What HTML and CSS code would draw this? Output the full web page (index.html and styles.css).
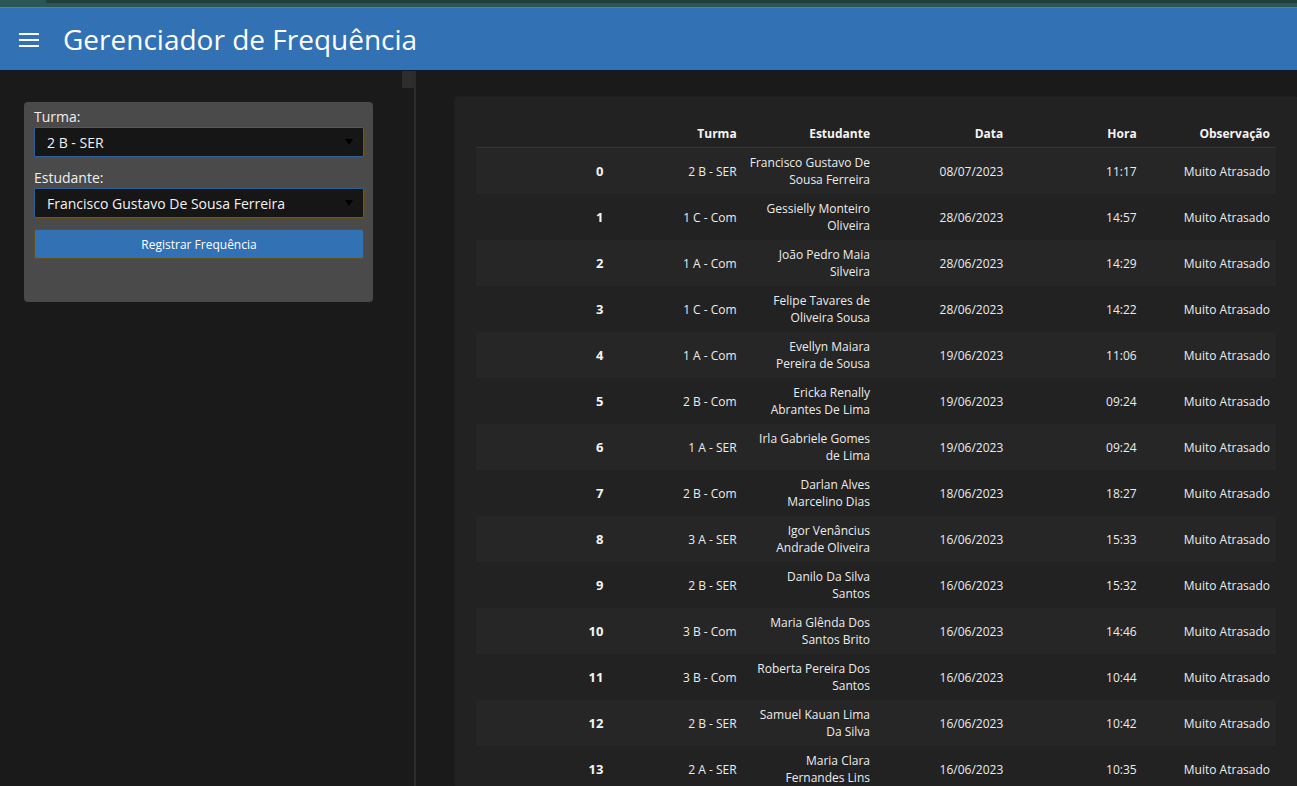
FILE: index.html
```html
<!DOCTYPE html>
<html lang="pt-BR">
<head>
<meta charset="utf-8">
<title>Gerenciador de Frequência</title>
<link rel="stylesheet" href="styles.css">
</head>
<body>
<div class="topstrip"><div class="topstrip-band"></div></div>
<header class="appbar">
  <svg class="menu-icon" width="20" height="14" viewBox="0 0 20 14" aria-hidden="true">
    <rect x="0" y="0" width="20" height="2" fill="#ffffff"/>
    <rect x="0" y="6" width="20" height="2" fill="#ffffff"/>
    <rect x="0" y="12" width="20" height="2" fill="#ffffff"/>
  </svg>
  <h1 class="title">Gerenciador de Frequência</h1>
</header>
<div class="layout">
  <aside class="sidebar">
    <div class="form-card">
      <label class="field-label">Turma:</label>
      <div class="select"><span>2 B - SER</span><span class="caret"></span></div>
      <label class="field-label second">Estudante:</label>
      <div class="select active"><span>Francisco Gustavo De Sousa Ferreira</span><span class="caret"></span></div>
      <button class="btn">Registrar Frequência</button>
    </div>
  </aside>
  <div class="scrolltrack"><div class="scrollthumb"></div></div>
  <main class="main">
    <div class="table-card">
      <table class="grid">
        <thead>
          <tr><th></th><th>Turma</th><th>Estudante</th><th>Data</th><th>Hora</th><th>Observação</th></tr>
        </thead>
        <tbody>
          <tr><td class="idx">0</td><td>2 B - SER</td><td>Francisco Gustavo De Sousa Ferreira</td><td>08/07/2023</td><td>11:17</td><td>Muito Atrasado</td></tr>
          <tr><td class="idx">1</td><td>1 C - Com</td><td>Gessielly Monteiro Oliveira</td><td>28/06/2023</td><td>14:57</td><td>Muito Atrasado</td></tr>
          <tr><td class="idx">2</td><td>1 A - Com</td><td>João Pedro Maia Silveira</td><td>28/06/2023</td><td>14:29</td><td>Muito Atrasado</td></tr>
          <tr><td class="idx">3</td><td>1 C - Com</td><td>Felipe Tavares de Oliveira Sousa</td><td>28/06/2023</td><td>14:22</td><td>Muito Atrasado</td></tr>
          <tr><td class="idx">4</td><td>1 A - Com</td><td>Evellyn Maiara Pereira de Sousa</td><td>19/06/2023</td><td>11:06</td><td>Muito Atrasado</td></tr>
          <tr><td class="idx">5</td><td>2 B - Com</td><td>Ericka Renally Abrantes De Lima</td><td>19/06/2023</td><td>09:24</td><td>Muito Atrasado</td></tr>
          <tr><td class="idx">6</td><td>1 A - SER</td><td>Irla Gabriele Gomes de Lima</td><td>19/06/2023</td><td>09:24</td><td>Muito Atrasado</td></tr>
          <tr><td class="idx">7</td><td>2 B - Com</td><td>Darlan Alves Marcelino Dias</td><td>18/06/2023</td><td>18:27</td><td>Muito Atrasado</td></tr>
          <tr><td class="idx">8</td><td>3 A - SER</td><td>Igor Venâncius Andrade Oliveira</td><td>16/06/2023</td><td>15:33</td><td>Muito Atrasado</td></tr>
          <tr><td class="idx">9</td><td>2 B - SER</td><td>Danilo Da Silva Santos</td><td>16/06/2023</td><td>15:32</td><td>Muito Atrasado</td></tr>
          <tr><td class="idx">10</td><td>3 B - Com</td><td>Maria Glênda Dos Santos Brito</td><td>16/06/2023</td><td>14:46</td><td>Muito Atrasado</td></tr>
          <tr><td class="idx">11</td><td>3 B - Com</td><td>Roberta Pereira Dos Santos</td><td>16/06/2023</td><td>10:44</td><td>Muito Atrasado</td></tr>
          <tr><td class="idx">12</td><td>2 B - SER</td><td>Samuel Kauan Lima Da Silva</td><td>16/06/2023</td><td>10:42</td><td>Muito Atrasado</td></tr>
          <tr><td class="idx">13</td><td>2 A - SER</td><td>Maria Clara Fernandes Lins</td><td>16/06/2023</td><td>10:35</td><td>Muito Atrasado</td></tr>
        </tbody>
      </table>
    </div>
  </main>
</div>
</body>
</html>
```

FILE: styles.css
```css
html, body {
  margin: 0;
  padding: 0;
  height: 786px;
  overflow: hidden;
  background: #1a1a1a;
  font-family: "Open Sans", "Noto Sans", "DejaVu Sans", sans-serif;
  color: #e8e8e8;
}

.topstrip {
  height: 8px;
  background: #2a5654;
  box-sizing: border-box;
  border-bottom: 1px solid #4d8a7c;
  padding-left: 46px;
}
.topstrip-band {
  height: 3px;
  background: #1f403f;
}

.appbar {
  height: 63px;
  background: #3171b4;
  border-bottom: 1px solid #0f1a26;
  display: flex;
  align-items: center;
  padding-left: 19px;
  box-sizing: border-box;
}
.menu-icon {
  flex: none;
  margin-top: 1px;
}
.title {
  margin: 0 0 0 24px;
  font-weight: 400;
  font-size: 28px;
  color: #ffffff;
  letter-spacing: 0;
}

.layout {
  display: flex;
  height: 715px;
}

.sidebar {
  width: 402px;
  flex: none;
  box-sizing: border-box;
  padding: 31px 29px 0 24px;
  background: #1a1a1a;
}

.scrolltrack {
  width: 14px;
  flex: none;
  background: #1a1a1a;
  border-right: 2px solid #2c2c2c;
  box-sizing: border-box;
}
.scrollthumb {
  height: 17px;
  background: #2d2d2d;
}

.form-card {
  background: #4a4a4a;
  border-radius: 4px;
  padding: 5px 9px 43px 10px;
  display: flex;
  flex-direction: column;
}

.field-label {
  font-size: 14px;
  line-height: 19px;
  color: #eeeeee;
  margin-bottom: 1px;
}
.field-label.second {
  margin-top: 11px;
}

.select {
  height: 30px;
  box-sizing: border-box;
  background: #161616;
  border: 1px solid #2f5f96;
  border-radius: 2px;
  box-shadow: 1px 1px 0 #5d4d22;
  display: flex;
  align-items: center;
  justify-content: space-between;
  padding: 0 10px 0 12px;
  font-size: 14px;
  color: #f2f2f2;
}
.caret {
  width: 0;
  height: 0;
  border-left: 4px solid transparent;
  border-right: 4px solid transparent;
  border-top: 6px solid #000000;
}

.btn {
  margin-top: 11px;
  height: 30px;
  background: #3171b4;
  border: 1px solid #5e4e22;
  border-radius: 2px;
  color: #ffffff;
  font-family: "Open Sans", "Noto Sans", sans-serif;
  font-size: 12px;
  padding: 0;
}

.main {
  flex: 1;
  min-width: 0;
  padding: 26px 0 0 39px;
  background: #1a1a1a;
  overflow: hidden;
}

.table-card {
  background: #222222;
  border-radius: 3px 0 0 0;
  padding: 23px 21px 0 21px;
  height: 100%;
  box-sizing: border-box;
  box-shadow: -1px -1px 0 #1e1e1e;
}

.grid {
  width: 800px;
  border-collapse: collapse;
  table-layout: fixed;
  font-size: 12px;
  line-height: 17px;
}
.grid th {
  text-align: right;
  font-weight: 700;
  color: #f4f4f4;
  padding: 5px 6px 5px 6px;
  border-bottom: 1px solid #353535;
}
.grid td {
  text-align: right;
  padding: 6px 6px;
  height: 34px;
  vertical-align: middle;
  color: #ececec;
}
.grid tbody tr:nth-child(odd) {
  background: #262626;
}
.grid td.idx {
  font-weight: 700;
  font-size: 13px;
  color: #f4f4f4;
}
```
